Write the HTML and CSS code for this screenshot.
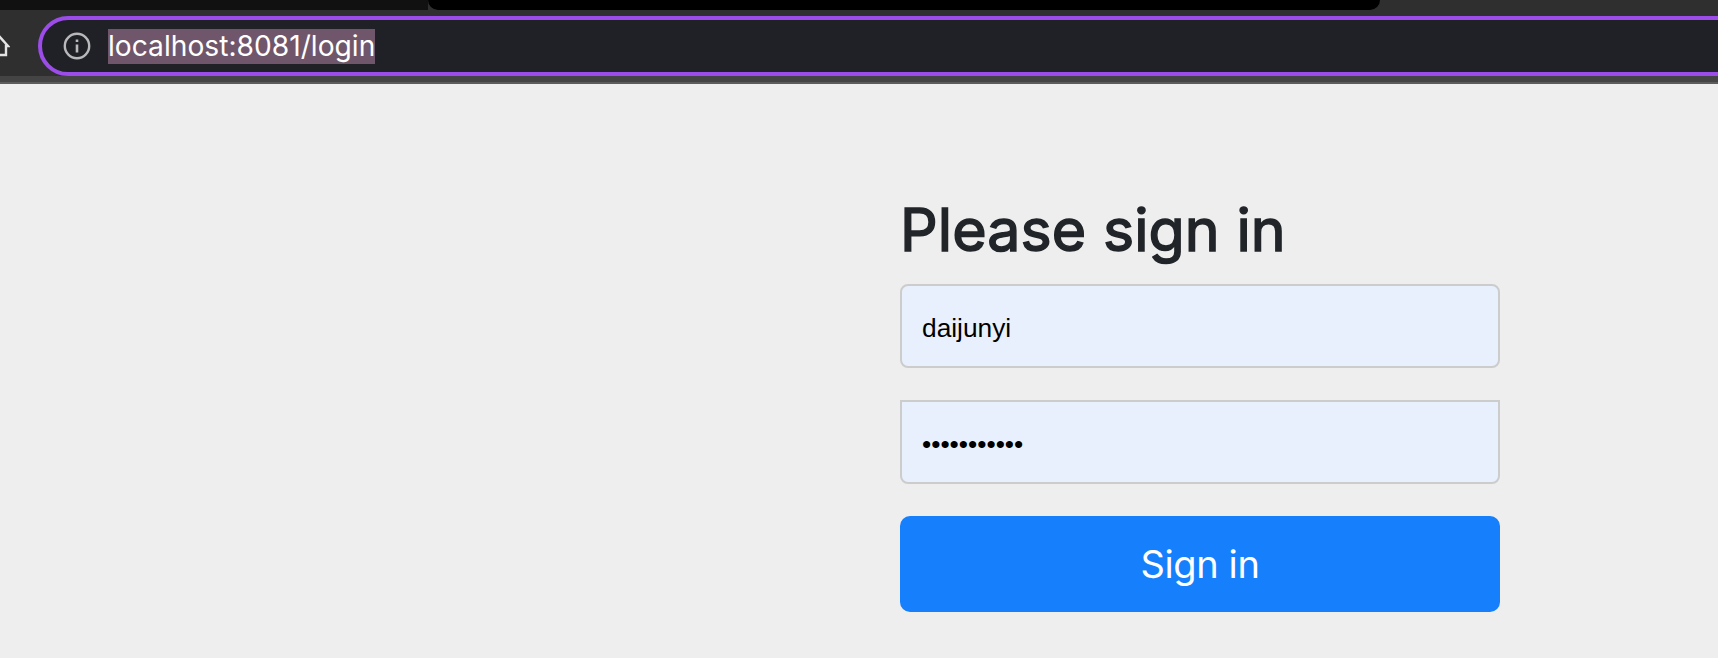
FILE: index.html
```html
<!DOCTYPE html>
<html lang="en">
<head>
    <meta charset="UTF-8">
    <meta name="viewport" content="width=device-width, initial-scale=1.0">
    <title>Please sign in</title>
    <link rel="stylesheet" href="styles.css">
</head>
<body>
    <header class="browser">
        <div class="tabstrip">
            <div class="tab-left"></div>
            <div class="tab-active"></div>
        </div>
        <div class="toolbar">
            <svg class="home-icon" viewBox="0 0 10 24" width="10" height="24" fill="none" stroke="#e4e4e4" stroke-width="2.4">
                <path d="M-10 12 L-1 2 L8 12 H6 V21 H-6"/>
            </svg>
            <div class="address-bar">
                <svg class="info-icon" viewBox="0 0 28 28" width="28" height="28" fill="none" stroke="#b9b9bb">
                    <circle cx="14" cy="14" r="12.2" stroke-width="2.4"/>
                    <path d="M14 12.5 V20.5" stroke-width="2.6"/>
                    <path d="M14 7.5 V10" stroke-width="2.6"/>
                </svg>
                <span class="url">localhost:8081/login</span>
            </div>
        </div>
        <div class="toolbar-edge"></div>
    </header>

    <main class="page">
        <form class="signin-form">
            <h2 class="signin-title">Please sign in</h2>
            <input class="field field-user" type="text" value="daijunyi">
            <input class="field field-pass" type="password" value="12345678901">
            <button class="signin-btn" type="button">Sign in</button>
        </form>
    </main>
</body>
</html>
```

FILE: styles.css
```css
/* General Styles */
html, body {
    margin: 0;
    padding: 0;
    height: 658px;
    overflow: hidden;
}

body {
    font-family: Inter, 'Liberation Sans', sans-serif;
    background-color: #eeeeee;
    color: #212529;
}

/* Browser chrome */
.tabstrip {
    display: flex;
    height: 10px;
    background-color: #2f2f2f;
}

.tab-left {
    width: 428px;
    background-color: #111111;
}

.tab-active {
    width: 952px;
    background-color: #000000;
    border-radius: 0 0 14px 14px;
}

.toolbar {
    display: flex;
    align-items: center;
    height: 66px;
    padding-top: 6px;
    box-sizing: border-box;
    background-color: #2f2f2f;
    overflow: hidden;
}

.toolbar-edge {
    height: 8px;
    box-sizing: border-box;
    background-color: #444444;
    border-bottom: 2px solid #5c5c5c;
}

.home-icon {
    flex: none;
    margin-right: 28px;
}

.address-bar {
    flex: none;
    display: flex;
    align-items: center;
    width: 1740px;
    height: 60px;
    box-sizing: border-box;
    padding-left: 21px;
    border: 4px solid #9b4ce9;
    border-radius: 30px;
    background-color: #202126;
}

.info-icon {
    flex: none;
    margin-right: 17px;
}

.url {
    background-color: #6f566b;
    color: #ffffff;
    font-size: 28.2px;
    line-height: 35px;
}

/* Login form */
.page {
    display: flex;
    padding: 107px 0 0 900px;
}

.signin-form {
    display: flex;
    flex-direction: column;
    width: 600px;
}

.signin-title {
    margin: 0 0 15px;
    font-size: 59px;
    font-weight: 400;
    -webkit-text-stroke: 1.5px #212529;
    letter-spacing: 0.1px;
    line-height: 78px;
}

.field {
    height: 84px;
    box-sizing: border-box;
    padding: 4px 20px 0;
    border: 2px solid #cccccc;
    background-color: #e8f0fe;
    color: #000000;
    font-family: 'Liberation Sans', sans-serif;
    font-size: 26.3px;
    outline: none;
}

.field-user {
    margin-bottom: 32px;
    border-radius: 8px;
}

.field-pass {
    margin-bottom: 32px;
    border-radius: 0 0 8px 8px;
}

.signin-btn {
    height: 96px;
    border: none;
    border-radius: 10px;
    background-color: #167ffc;
    color: #ffffff;
    font-family: Inter, sans-serif;
    font-size: 38px;
    letter-spacing: -0.4px;
    cursor: pointer;
}
```
